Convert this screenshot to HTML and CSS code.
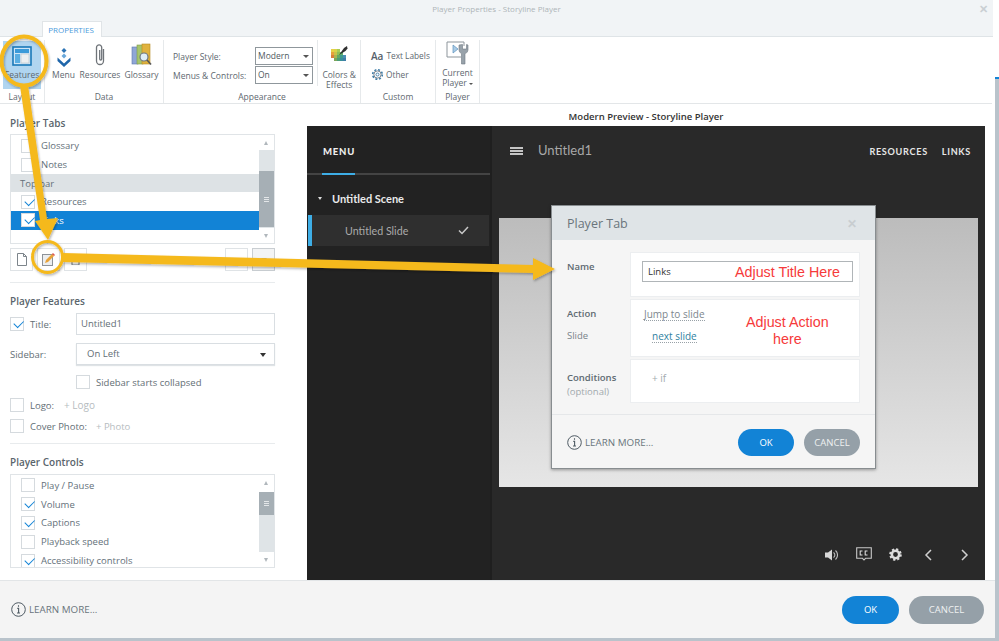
FILE: index.html
```html
<!DOCTYPE html>
<html lang="en">
<head>
<meta charset="utf-8">
<title>Player Properties - Storyline Player</title>
<link rel="stylesheet" href="styles.css">
</head>
<body>
<div class="app">
  <header class="titlebar">
    <div class="tab">PROPERTIES</div>
    <div class="wintitle">Player Properties - Storyline Player</div>
    <div class="winclose">✕</div>
  </header>

  <nav class="ribbon">
    <section class="group g-layout">
      <div class="tools">
        <div class="tool active">
          <svg class="ic" width="20" height="20" viewBox="0 0 20 20"><rect x="1" y="1" width="18" height="18" fill="#cfe6f7" stroke="#1a78b8" stroke-width="1.6"/><rect x="3" y="3" width="14" height="4" fill="#3b9ad9"/><rect x="3" y="8" width="5" height="9" fill="#5aaee2"/><rect x="9" y="8" width="8" height="9" fill="#eceff1" stroke="#b5bec5" stroke-width=".6"/></svg>
          <span>Features</span>
        </div>
      </div>
      <div class="glabel">Layout</div>
    </section>
    <section class="group g-data">
      <div class="tools">
        <div class="tool t-menu">
          <svg class="ic" width="16" height="20" viewBox="0 0 16 20"><path d="M8 1l2.5 2.5L8 6 5.500 3.500z" fill="#2d74b5"/><path d="M8 6.500l2.500 2.500L8 11.500 5.500 9z" fill="#6aa8da"/><path d="M1.500 10.500L8 16.500l6.500-6v3.500L8 20l-6.500-6z" fill="#1f66aa"/></svg>
          <span>Menu</span>
        </div>
        <div class="tool t-res">
          <svg class="ic" width="12" height="24" viewBox="0 0 12 24"><path d="M9.500 6v12a3.500 3.500 0 0 1-7 0V4.500a2.600 2.600 0 0 1 5.200 0V16a1 1 0 0 1-2 0V7" fill="none" stroke="#6f7479" stroke-width="1.300"/></svg>
          <span>Resources</span>
        </div>
        <div class="tool t-glo">
          <svg class="ic" width="22" height="24" viewBox="0 0 22 24"><rect x="1" y="4" width="6" height="17" fill="#8fa6d6" stroke="#5f78ad" stroke-width=".6"/><rect x="6" y="2" width="6" height="19" fill="#a6c56d" stroke="#7f9a48" stroke-width=".6"/><rect x="11" y="1" width="8" height="20" fill="#e0b23e" stroke="#b58a22" stroke-width=".6"/><circle cx="13" cy="14" r="4" fill="#dfeef6" stroke="#6d7780" stroke-width="1.200"/><path d="M16 17l4 4.500" stroke="#555" stroke-width="1.600"/></svg>
          <span>Glossary</span>
        </div>
      </div>
      <div class="glabel">Data</div>
    </section>
    <section class="group g-appear">
      <div class="tools">
        <div class="formgrid">
          <span class="flabel">Player Style:</span>
          <div class="rselect">Modern<i class="rcaret"></i></div>
          <span class="flabel">Menus &amp; Controls:</span>
          <div class="rselect">On<i class="rcaret"></i></div>
        </div>
        <div class="tool t-colors">
          <svg class="ic" width="18" height="18" viewBox="0 0 18 18"><rect x="1" y="4" width="3" height="3" fill="#e8d048"/><rect x="4" y="4" width="3" height="3" fill="#d8d24a"/><rect x="7" y="4" width="3" height="3" fill="#a8cc54"/><rect x="1" y="7" width="3" height="3" fill="#e6a23c"/><rect x="4" y="7" width="3" height="3" fill="#c9c24a"/><rect x="7" y="7" width="3" height="3" fill="#8dbf58"/><rect x="10" y="7" width="3" height="3" fill="#5fb06c"/><rect x="1" y="10" width="3" height="3" fill="#d9803c"/><rect x="4" y="10" width="3" height="3" fill="#a8b552"/><rect x="7" y="10" width="3" height="3" fill="#63a964"/><rect x="10" y="10" width="3" height="3" fill="#3f9c8c"/><rect x="13" y="10" width="3" height="3" fill="#4c8fb5"/><rect x="4" y="13" width="3" height="3" fill="#7ba65a"/><rect x="7" y="13" width="3" height="3" fill="#4a9d78"/><rect x="10" y="13" width="3" height="3" fill="#3a8f9a"/><rect x="13" y="13" width="3" height="3" fill="#3f7fa8"/><path d="M9 10l5-7 3-2 .5 2.500-2 2.500z" fill="#2f2f2f"/></svg>
          <span>Colors &amp;<br>Effects</span>
        </div>
      </div>
      <div class="glabel">Appearance</div>
    </section>
    <section class="group g-custom">
      <div class="tools customlist">
        <div class="citem"><b class="aa">Aa</b><span>Text Labels</span></div>
        <div class="citem">
          <svg width="13" height="13" viewBox="0 0 13 13"><circle cx="6.500" cy="6.500" r="4.800" fill="none" stroke="#3f7da8" stroke-width="1.600" stroke-dasharray="2 1.770"/><circle cx="6.500" cy="6.500" r="3.600" fill="none" stroke="#5e6a73" stroke-width=".8"/><circle cx="6.500" cy="6.500" r="1.500" fill="none" stroke="#3f7da8" stroke-width=".9"/></svg>
          <span>Other</span>
        </div>
      </div>
      <div class="glabel">Custom</div>
    </section>
    <section class="group g-player">
      <div class="tools">
        <div class="tool t-player">
          <svg class="ic" width="24" height="24" viewBox="0 0 24 24"><path d="M15 16H1V1h17v4" fill="#fff" stroke="#8d959b" stroke-width="1"/><path d="M7 4v8l5-4z" fill="#a9cbe6" stroke="#5d92bd" stroke-width=".7"/><path d="M13 4v5a4 4 0 0 0 2.500 3.600V23h3.500V12.600A4 4 0 0 0 22 9V4l-1.500-.5V8h-4V3.500z" fill="#98a2aa" stroke="#717b83" stroke-width=".6"/></svg>
          <span>Current<br>Player<i class="mini"></i></span>
        </div>
      </div>
      <div class="glabel">Player</div>
    </section>
  </nav>

  <main class="main">
    <aside class="panel">
      <h2 class="h">Player Tabs</h2>
      <div class="listbox lb-tabs">
        <div class="rows">
          <div class="row"><i class="cb"></i><span>Glossary</span></div>
          <div class="row"><i class="cb"></i><span>Notes</span></div>
          <div class="row groupline">Top bar</div>
          <div class="row"><i class="cb on"></i><span>Resources</span></div>
          <div class="row selected"><i class="cb on"></i><span>Links</span></div>
        </div>
        <div class="scroll sc-tabs"><i class="up"></i><div class="thumbzone"><div class="thumb"><b></b></div></div><i class="down"></i></div>
      </div>
      <div class="toolbar">
        <button class="tbtn"><svg width="10" height="13" viewBox="0 0 10 13"><path d="M.5.500h6l3 3v9h-9z M6.500.500v3h3" fill="#fff" stroke="#7d858b"/></svg></button>
        <button class="tbtn"><svg width="13" height="13" viewBox="0 0 13 13"><rect x=".5" y="1.500" width="10" height="11" fill="#eceef0" stroke="#8d9298"/><path d="M3 10l1-3 6-6 2 2-6 6z" fill="#e8a33a"/><path d="M10 1l1-1 2 2-1 1z" fill="#e0564f"/></svg></button>
        <button class="tbtn"><svg width="9" height="11" viewBox="0 0 9 11"><path d="M1 3h7v8H1zM0 2h9M3 2V0h3v2" fill="none" stroke="#6f777d"/></svg></button>
        <span class="spacer"></span>
        <button class="tbtn"><i class="tri-up"></i></button>
        <button class="tbtn dim"><i class="tri-down"></i></button>
      </div>
      <hr class="rule r1">

      <h2 class="h h2">Player Features</h2>
      <div class="frow fr-title"><i class="cb on"></i><label class="lb">Title:</label><div class="field">Untitled1</div></div>
      <div class="frow fr-side"><label class="lb lb0">Sidebar:</label><div class="field sel">On Left<i class="caret"></i></div></div>
      <div class="frow fr-coll"><i class="cb"></i><label class="lb">Sidebar starts collapsed</label></div>
      <div class="frow fr-logo"><i class="cb"></i><label class="lb">Logo:</label><span class="add">+ Logo</span></div>
      <div class="frow fr-cover"><i class="cb"></i><label class="lb">Cover Photo:</label><span class="add">+ Photo</span></div>
      <hr class="rule r2">

      <h2 class="h h3">Player Controls</h2>
      <div class="listbox lb-ctrl">
        <div class="rows">
          <div class="row"><i class="cb"></i><span>Play / Pause</span></div>
          <div class="row"><i class="cb on"></i><span>Volume</span></div>
          <div class="row"><i class="cb on"></i><span>Captions</span></div>
          <div class="row"><i class="cb"></i><span>Playback speed</span></div>
          <div class="row"><i class="cb on"></i><span>Accessibility controls</span></div>
        </div>
        <div class="scroll sc-ctrl"><i class="up"></i><div class="thumbzone"><div class="thumb"><b></b></div></div><i class="down"></i></div>
      </div>
    </aside>

    <section class="preview">
      <div class="ptitle">Modern Preview - Storyline Player</div>
      <div class="player">
        <div class="side">
          <div class="sidehead"><span class="menutab">MENU</span></div>
          <div class="scene"><i class="scaret"></i>Untitled Scene</div>
          <div class="slide"><span>Untitled Slide</span><svg width="11" height="9" viewBox="0 0 11 9"><path d="M1 4.500l3 3 6-6.500" fill="none" stroke="#c8c8c8" stroke-width="1.500"/></svg></div>
        </div>
        <div class="pmain">
          <div class="ptop">
            <div class="burger"><i></i><i></i><i></i></div>
            <span class="ctitle">Untitled1</span>
            <span class="plink l1">RESOURCES</span>
            <span class="plink">LINKS</span>
          </div>
          <div class="stage"></div>
          <div class="pbottom">
            <svg class="b-vol" width="13" height="12" viewBox="0 0 13 12"><path d="M0 3.500h3L7 .5v11L3 8.500H0z" fill="#d8d8d8"/><path d="M8.500 3.500a3 3 0 0 1 0 5M10.500 1.500a6 6 0 0 1 0 9" fill="none" stroke="#bdbdbd" stroke-width="1.100"/></svg>
            <svg class="b-cc" width="16" height="14" viewBox="0 0 16 14"><path d="M.7.700h14.600v10.600H9.500L8 13l-1.500-1.700H.7z" fill="none" stroke="#c8c8c8" stroke-width="1.100"/><path d="M6.500 4H4.200v4h2.300M11.500 4H9.200v4h2.300" fill="none" stroke="#dcdcdc" stroke-width="1.100"/></svg>
            <svg class="b-gear" width="13" height="13" viewBox="0 0 13 13"><circle cx="6.500" cy="6.500" r="3.700" fill="none" stroke="#dcdcdc" stroke-width="2.600"/><circle cx="6.500" cy="6.500" r="5.300" fill="none" stroke="#dcdcdc" stroke-width="2" stroke-dasharray="2.200 1.950"/></svg>
            <svg class="b-prev" width="8" height="12" viewBox="0 0 8 12"><path d="M7 1L2 6l5 5" fill="none" stroke="#cfcfcf" stroke-width="1.500"/></svg>
            <svg class="b-next" width="8" height="12" viewBox="0 0 8 12"><path d="M1 1l5 5-5 5" fill="none" stroke="#cfcfcf" stroke-width="1.500"/></svg>
          </div>
          <div class="dialog">
            <div class="dhead"><span>Player Tab</span><b class="dx">✕</b></div>
            <div class="dbody">
              <div class="drow dr1">
                <div class="dlabels"><strong>Name</strong></div>
                <div class="dpanel">
                  <div class="dinput">Links<em class="red r-title">Adjust Title Here</em></div>
                </div>
              </div>
              <div class="drow dr2">
                <div class="dlabels"><strong>Action</strong><span>Slide</span></div>
                <div class="dpanel">
                  <a class="dash jump">Jump to slide</a>
                  <a class="dash next">next slide</a>
                  <em class="red r-action">Adjust Action<br>here</em>
                </div>
              </div>
              <div class="drow dr3">
                <div class="dlabels"><strong>Conditions</strong><span class="opt">(optional)</span></div>
                <div class="dpanel"><span class="plusif">+ if</span></div>
              </div>
            </div>
            <div class="dfoot">
              <svg class="info" width="15" height="15" viewBox="0 0 15 15"><circle cx="7.500" cy="7.500" r="6.800" fill="none" stroke="#4e5a63" stroke-width="1"/><path d="M7.500 3.300v1.400M6.300 6.400h1.300v4.600M6 11h3" fill="none" stroke="#4e5a63" stroke-width="1.100"/></svg>
              <span class="learn">LEARN MORE...</span>
              <span class="spacer"></span>
              <button class="btn ok small">OK</button>
              <button class="btn cancel small">CANCEL</button>
            </div>
          </div>
        </div>
      </div>
    </section>
  </main>

  <footer class="footer">
    <svg class="info" width="15" height="15" viewBox="0 0 15 15"><circle cx="7.500" cy="7.500" r="6.800" fill="none" stroke="#4e5a63" stroke-width="1"/><path d="M7.500 3.300v1.400M6.300 6.400h1.300v4.600M6 11h3" fill="none" stroke="#4e5a63" stroke-width="1.100"/></svg>
    <span class="learn">LEARN MORE...</span>
    <span class="spacer"></span>
    <button class="btn ok">OK</button>
    <button class="btn cancel">CANCEL</button>
  </footer>
</div>
<div class="edge"></div>

<svg class="annot" width="999" height="641" viewBox="0 0 999 641">
  <defs><filter id="sh" x="-5%" y="-5%" width="110%" height="110%"><feDropShadow dx="1" dy="1.500" stdDeviation="1" flood-color="#000" flood-opacity=".3"/></filter></defs>
  <g filter="url(#sh)" fill="#f5b91e">
    <ellipse cx="24" cy="61" rx="22.500" ry="24.500" fill="none" stroke="#f5b91e" stroke-width="4"/>
    <ellipse cx="47.500" cy="257" rx="15" ry="15.500" fill="none" stroke="#f5b91e" stroke-width="3"/>
    <path d="M20 86l8-1 19 134 11-1-10 22-13-19 5-1z"/>
    <path d="M63 253l470 12v-7l22 11-22 11v-7L63 262z"/>
  </g>
</svg>
</body>
</html>
```
FILE: styles.css
```css
* { box-sizing: border-box; }
html, body { margin: 0; padding: 0; }
body { width: 999px; height: 641px; overflow: hidden; background: #fff; font-family: "Open Sans", "Liberation Sans", sans-serif; color: #5d686f; position: relative; display: flex; }
i, em { font-style: normal; display: inline-block; }
button { font-family: inherit; }
.spacer { flex: 1; }

.app { width: 995px; height: 641px; flex: none; display: flex; flex-direction: column; }
.edge { width: 4px; flex: none; margin-top: 77px; background: #b9c3cb; border-top: 2px solid #1283d6; }

/* title bar */
.titlebar { height: 37px; flex: none; background: #f1f4f6; position: relative; border-bottom: 1px solid #dfe4e7; margin-right: 2px; }
.tab { position: absolute; left: 42px; top: 21px; width: 60px; height: 16px; background: #fff; border: 1px solid #e0e4e7; border-bottom: 0; color: #4d9bdc; font-size: 8px; line-height: 15px; text-align: center; padding-right: 2px; }
.wintitle { text-align: center; font-size: 8px; line-height: 17px; color: #aeb4b8; }
.winclose { position: absolute; right: 5px; top: 1px; font-size: 11px; font-weight: 700; color: #c9cfd3; }

/* ribbon */
.ribbon { height: 67px; flex: none; display: flex; background: #fff; border-bottom: 1px solid #e3e6e8; padding-top: 3px; margin-right: 3px; }
.group { display: flex; flex-direction: column; height: 63px; border-right: 1px solid #e6e9eb; }
.tools { height: 51px; flex: none; display: flex; }
.glabel { font-size: 8.500px; line-height: 12px; height: 12px; text-align: center; color: #5e686f; }
.g-layout { width: 45px; }
.g-data { width: 119px; }
.g-appear { width: 197px; }
.g-custom { width: 75px; }
.g-player { width: 44px; }
.tool { display: flex; flex-direction: column; align-items: center; font-size: 8.500px; line-height: 10px; color: #5e686f; text-align: center; white-space: nowrap; }
.tool .ic { flex: none; }
.tool.active { width: 38px; margin: 1px 0 0 3px; height: 48px; background: #b0d5f0; padding-top: 5px; }
.tool.active span { margin-top: 4px; margin-left: -2px; margin-right: -2px; }
.t-menu { width: 31px; margin-left: 3px; padding-top: 7px; }
.t-menu span { margin-top: 3px; }
.t-res { width: 42px; padding-top: 3px; }
.t-res span { margin-top: 3px; }
.t-glo { width: 39px; padding-top: 3px; margin-left: 1px; }
.t-glo span { margin-top: 3px; }
.formgrid { display: grid; grid-template-columns: 82px 58px; grid-auto-rows: 18px; row-gap: 1px; padding: 7px 0 0 9px; align-items: center; font-size: 8.500px; width: 153px; }
.flabel { color: #5e686f; white-space: nowrap; }
.rselect { height: 18px; border: 1px solid #8f979c; font-size: 8.500px; line-height: 16px; padding-left: 2px; color: #4f5a61; position: relative; }
.rcaret { position: absolute; right: 3px; top: 7px; border: 3px solid transparent; border-top-color: #555; border-bottom: 0; }
.t-colors { width: 43px; padding-top: 5px; margin-left: 2px; border-left: 1px solid #e6e9eb; height: 46px; }
.t-colors span { margin-top: 7px; }
.customlist { flex-direction: column; padding: 9px 0 0 10px; gap: 6px; }
.citem { display: flex; align-items: center; gap: 2px; font-size: 8.300px; height: 13px; color: #5e686f; white-space: nowrap; }
.aa { font-weight: 600; font-size: 10px; color: #55606a; margin-right: 1px; }
.t-player { width: 43px; padding-top: 1px; }
.t-player span { margin-top: 3px; }
.mini { border: 2px solid transparent; border-top-color: #555; border-bottom: 0; margin-left: 2px; vertical-align: middle; }

/* main */
.main { flex: 1; display: flex; min-height: 0; }
.panel { width: 307px; flex: none; padding: 0 32px 0 10px; background: #fff; }
.h { margin: 0; font-size: 10px; line-height: 14px; font-weight: 600; color: #5a656c; }
.panel > .h:first-child { margin-top: 12px; }
.listbox { display: flex; border: 1px solid #e0e4e7; background: #fff; margin-top: 4px; overflow: hidden; }
.lb-tabs { height: 110px; }
.lb-tabs .rows { padding-top: 1.600px; }
.lb-ctrl { height: 94px; margin-top: 5px; }
.rows { flex: 1; min-width: 0; padding-top: 1px; }
.row { height: 18.800px; display: flex; align-items: center; padding-left: 10px; font-size: 9.500px; color: #64707a; }
.row span { margin-left: 6px; }
.groupline { background: #dde2e5; padding-left: 9px; height: 18px; }
.selected { background: #1283d6; color: #fff; }
.cb { width: 14px; height: 14px; flex: none; border: 1px solid #d5dade; background: #fff; position: relative; }
.cb.on::after { content: ""; position: absolute; left: 2.500px; top: 2px; width: 8px; height: 4.500px; border-left: 1.800px solid #1283d6; border-bottom: 1.800px solid #1283d6; transform: rotate(-45deg); }
.scroll { width: 15px; flex: none; background: #dfe4e7; display: flex; flex-direction: column; }
.up, .down { height: 15px; background: #fff; flex: none; position: relative; display: block; }
.up::after, .down::after { content: ""; position: absolute; left: 5px; top: 6px; border: 2.500px solid transparent; }
.up::after { border-bottom: 4px solid #b0b7bc; border-top: 0; }
.down::after { border-top: 4px solid #b0b7bc; border-bottom: 0; }
.thumbzone { flex: 1; display: flex; flex-direction: column; }
.sc-tabs .thumb { height: 56px; margin-top: 21px; }
.sc-ctrl .up { height: 17px; }
.sc-ctrl .thumb { height: 23px; }
.thumb { background: #a6afb5; display: flex; align-items: center; justify-content: center; }
.thumb b { width: 5px; height: 5px; border-top: 1px solid #e3e6e8; border-bottom: 1px solid #e3e6e8; background: linear-gradient(#a6afb5 40%, #e3e6e8 40%, #e3e6e8 60%, #a6afb5 60%); }

.toolbar { display: flex; gap: 4px; margin-top: 4px; height: 23px; }
.tbtn { width: 23px; height: 23px; padding: 0; background: #fff; border: 1px solid #dfe3e6; display: flex; align-items: center; justify-content: center; }
.tbtn.dim { background: #f3f4f5; border-color: #c9ced2; }
.tri-up { border: 3px solid transparent; border-bottom: 3px solid #c5cacd; border-top: 0; }
.tri-down { border: 3px solid transparent; border-top: 3px solid #8d9499; border-bottom: 0; }
.rule { border: 0; height: 1px; background: #e8ebed; margin: 0; }
.r1 { margin-top: 11px; }
.h2 { margin-top: 11px; }
.frow { display: flex; align-items: center; font-size: 9.500px; color: #636e75; }
.lb { margin-left: 6px; white-space: nowrap; }
.lb0 { margin-left: 0; }
.fr-title { margin-top: 5px; height: 22px; }
.fr-title .lb { width: 46px; }
.field { width: 199px; height: 22px; border: 1px solid #d9dee2; line-height: 20px; padding-left: 4px; color: #636e75; background: #fff; }
.fr-side { margin-top: 8px; }
.fr-side .lb { width: 66px; }
.sel { padding-left: 10px; position: relative; box-shadow: 0 1px 1px #dfe3e6; }
.caret { position: absolute; right: 8px; top: 9px; border: 3.500px solid transparent; border-top: 4px solid #333; border-bottom: 0; }
.fr-coll { margin: 10px 0 0 66px; height: 14px; }
.fr-logo { margin-top: 9px; height: 14px; }
.fr-cover { margin-top: 7px; height: 14px; }
.add { margin-left: 10px; color: #b6bcc0; font-size: 10px; }
.fr-cover .add { margin-left: 9px; font-size: 9.500px; }
.r2 { margin-top: 10px; }
.h3 { margin-top: 11px; }

/* preview */
.preview { flex: 1; min-width: 0; padding-right: 10px; display: flex; flex-direction: column; background: #fff; }
.ptitle { height: 22px; flex: none; text-align: center; font-size: 9.500px; font-weight: 600; color: #333; line-height: 26px; }
.player { height: 454px; flex: none; display: flex; background: #292929; font-family: "Lato", sans-serif; }
.side { width: 185px; flex: none; background: #222; border-right: 2px solid #1f1f1f; }
.sidehead { height: 49px; border-bottom: 2px solid #444; position: relative; padding: 13px 0 0 16px; }
.menutab { font-size: 9.500px; font-weight: 900; letter-spacing: .8px; color: #eee; }
.menutab::after { content: ""; position: absolute; left: 15px; top: 47px; width: 33px; height: 2px; background: #3eaee6; }
.scene { display: flex; align-items: center; height: 40px; padding: 6px 0 0 11px; color: #eaeaea; font-weight: 700; font-size: 11px; }
.scaret { border: 2.500px solid transparent; border-top: 3px solid #ddd; border-bottom: 0; margin-right: 10px; }
.slide { height: 31px; margin: 0 1px 0 1px; background: #2f2f2f; border-left: 4px solid #3eaee6; display: flex; align-items: center; justify-content: space-between; padding: 0 20px 0 33px; font-size: 10.700px; color: #aaa; }
.pmain { flex: 1; position: relative; display: flex; flex-direction: column; }
.ptop { height: 92px; flex: none; display: flex; align-items: flex-start; padding: 16px 14px 0 18px; }
.burger { width: 13px; display: flex; flex-direction: column; gap: 1px; margin-top: 5px; }
.burger i { height: 2px; background: #c4c4c4; display: block; }
.ctitle { font-size: 13px; color: #a8a8a8; margin-left: 15px; line-height: 17px; }
.plink { font-size: 9.100px; font-weight: 700; letter-spacing: .7px; color: #e6e6e6; line-height: 19px; margin-left: 14px; }
.l1 { margin-left: auto; }
.stage { height: 269px; flex: none; margin: 0 7px; background: linear-gradient(#bcbcbc, #e6e6e6); }
.pbottom { flex: 1; display: flex; align-items: flex-end; padding: 0 16px 19px 0; justify-content: flex-end; }
.b-cc { margin-left: 18px; }
.b-gear { margin-left: 17px; }
.b-prev { margin-left: 22px; }
.b-next { margin-left: 29px; }
.dialog { position: absolute; left: 59px; top: 79px; width: 325px; height: 264px; background: #f5f5f5; border: 1px solid #888d90; box-shadow: 0 1px 3px rgba(0,0,0,.35); font-family: "Open Sans", sans-serif; display: flex; flex-direction: column; }
.dhead { height: 34px; flex: none; background: #dfe4e7; display: flex; align-items: center; justify-content: space-between; padding: 1px 18px 0 15px; font-size: 12.500px; color: #6a757c; }
.dx { color: #c8cdd0; font-size: 12px; }
.dbody { flex: 1; padding-top: 12px; border-bottom: 1px solid #e5e7e9; }
.drow { display: flex; margin-bottom: 2px; }
.dr1 { height: 45px; }
.dr2 { height: 58px; }
.dr3 { height: 44px; }
.dlabels { width: 78px; padding: 8px 0 0 15px; display: flex; flex-direction: column; font-size: 9.500px; color: #79838a; }
.dlabels strong { font-weight: 600; color: #5e6a72; line-height: 14px; }
.dr2 .dlabels span { margin-top: 8px; }
.dr3 .dlabels { padding-top: 12px; }
.opt { color: #a2a9ad; line-height: 13px; }
.dpanel { width: 230px; background: #fff; border: 1px solid #eceef0; position: relative; padding-left: 11px; display: flex; flex-direction: column; align-items: flex-start; font-size: 10px; }
.dinput { width: 211px; height: 21px; border: 1px solid #b0b5b8; margin-top: 8px; padding-left: 5px; line-height: 19px; color: #333; font-size: 9.500px; }
.red { position: absolute; color: #f63a3a; font-family: "Liberation Sans", sans-serif; font-size: 14.300px; line-height: 17px; text-align: center; white-space: nowrap; }
.r-title { left: 104px; top: 11px; }
.r-action { left: 115px; top: 14px; }
.dash { color: #7c868d; border-bottom: 1px dotted #98a1a7; line-height: 12px; }
.jump { margin: 8px 0 0 2px; }
.next { margin: 9px 0 0 10px; color: #2f7f9f; }
.plusif { color: #a4abaf; margin: 11px 0 0 10px; }
.dfoot { height: 53px; flex: none; display: flex; align-items: center; padding: 1px 15px 0; }
.learn { font-size: 9.800px; color: #6a757c; margin-left: 3px; }
.btn { border: 0; border-radius: 14px; color: #fff; font-size: 9.500px; height: 28px; padding: 0; }
.ok { background: #1283d6; }
.cancel { background: #95a0a8; color: #eef0f1; }
.btn.small { height: 27px; }
.small.ok { width: 56px; margin-right: 10px; }
.small.cancel { width: 56px; }

/* footer */
.footer { height: 61px; flex: none; background: #f4f4f4; border-top: 1px solid #e2e5e7; border-bottom: 3px solid #b9c3cb; display: flex; align-items: center; padding: 0 11px; }
.footer .btn.ok { width: 57px; margin-right: 10px; }
.footer .btn.cancel { width: 75px; }
.annot { position: absolute; left: 0; top: 0; pointer-events: none; }
```
